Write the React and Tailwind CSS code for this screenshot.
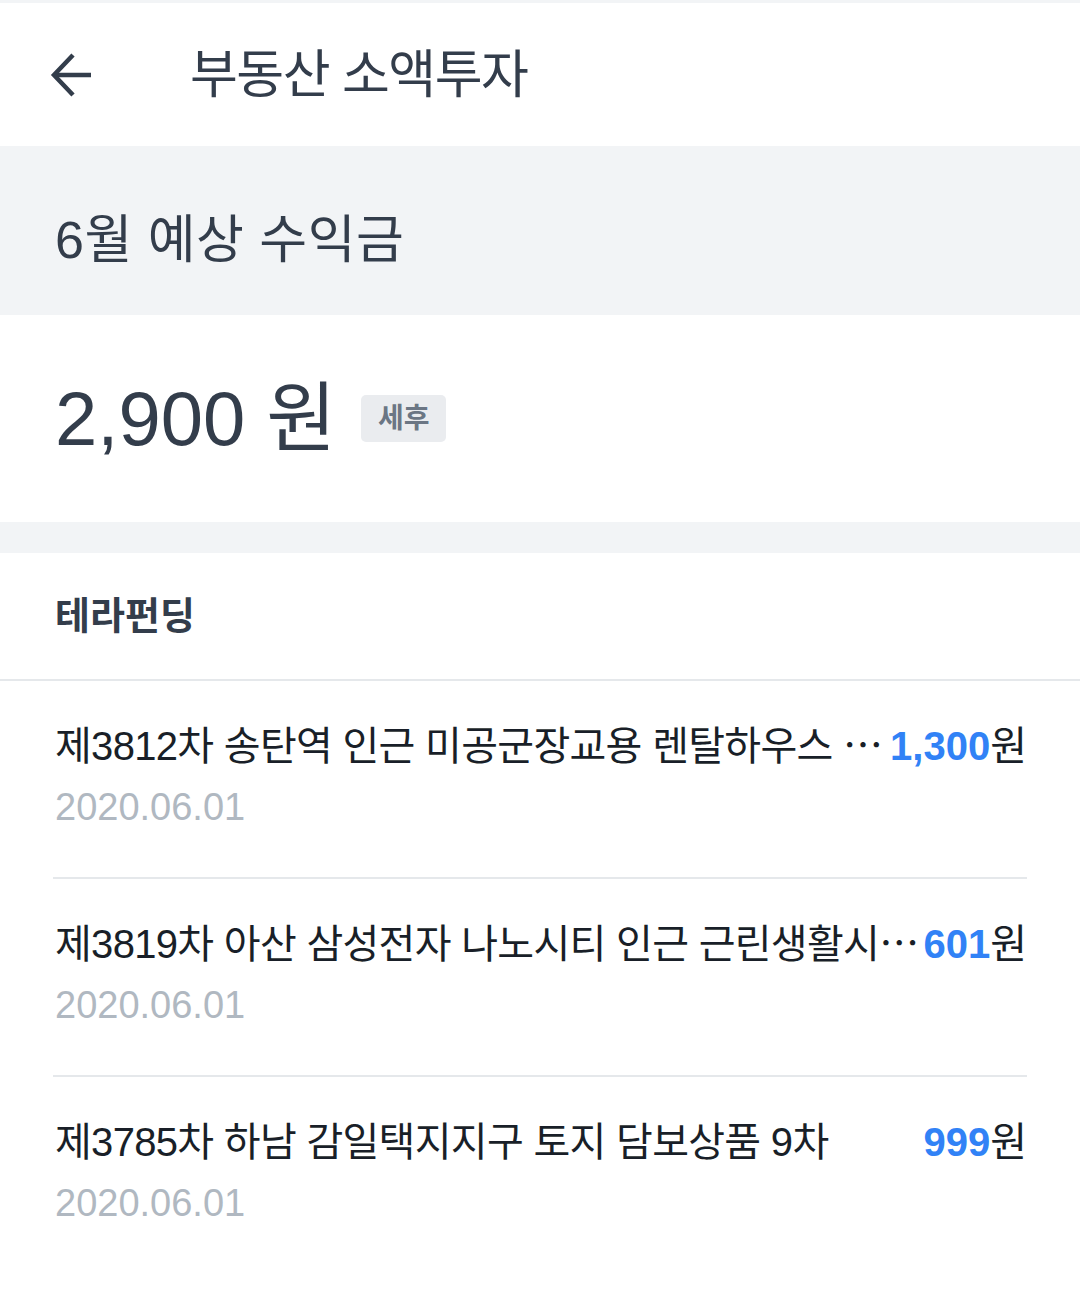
const font = { fontFamily: '"Liberation Sans", "Noto Sans CJK KR", sans-serif' };

const items = [
    { id: 1, title: '제3812차 송탄역 인근 미공군장교용 렌탈하우스 ⋯', amount: '1,300', date: '2020.06.01' },
    { id: 2, title: '제3819차 아산 삼성전자 나노시티 인근 근린생활시⋯', amount: '601', date: '2020.06.01' },
    { id: 3, title: '제3785차 하남 감일택지지구 토지 담보상품 9차', amount: '999', date: '2020.06.01' },
];

function BackArrow() {
    return (
        <svg width="48" height="48" viewBox="0 0 48 48" fill="none" stroke="#333d4b" strokeWidth="4.5" strokeLinecap="butt" strokeLinejoin="miter">
            <path d="M42 24H6" />
            <path d="M24 4L5 24l19 20" />
        </svg>
    );
}

export default function App() {
    return (
        <div className="w-[1080px] min-h-[1310px] bg-white text-[#333d4b]" style={font}>
            <div className="h-[3px] bg-[#f2f4f6]" />
            <header className="flex h-[143px] items-center">
                <button type="button" aria-label="뒤로" className="ml-[49px] flex h-12 w-12 items-center">
                    <BackArrow />
                </button>
                <h1 className="ml-[93px] text-[52px] leading-none tracking-[-1.5px]">부동산 소액투자</h1>
            </header>

            <div className="flex h-[169px] items-center bg-[#f2f4f6] px-[55px] pt-[18px]">
                <h2 className="text-[52px] leading-none tracking-[0.5px]">6월 예상 수익금</h2>
            </div>

            <div className="flex h-[207px] items-center px-[55px]">
                <span className="text-[76px] leading-none">2,900 원</span>
                <span className="ml-[25px] flex h-[47px] w-[85px] items-center justify-center rounded-[5px] bg-[#eaecef] text-[28px] font-bold text-[#6b7684]">
                    세후
                </span>
            </div>

            <div className="h-[31px] bg-[#f2f4f6]" />

            <div className="flex h-[128px] items-center border-b-2 border-[#e5e8eb] px-[55px]">
                <h3 className="text-[38px] font-bold leading-none">테라펀딩</h3>
            </div>

            <ul className="px-[53px]">
                {items.map((item) => (
                    <li key={item.id} className="border-b-2 border-[#e5e8eb] pt-[37px] pb-[46px] last:border-b-0">
                        <div className="flex h-[56px] items-center text-[40px] text-[#191f28]">
                            <span className="min-w-0 flex-1 overflow-hidden whitespace-nowrap pl-[2px] tracking-[-0.7px]">{item.title}</span>
                            <span className="shrink-0">
                                <span className="font-bold text-[#3182f6]">{item.amount}</span>원
                            </span>
                        </div>
                        <div className="mt-[9px] h-[48px] pl-[2px] text-[38px] leading-[48px] text-[#b0b8c1]">{item.date}</div>
                    </li>
                ))}
            </ul>
        </div>
    );
}
